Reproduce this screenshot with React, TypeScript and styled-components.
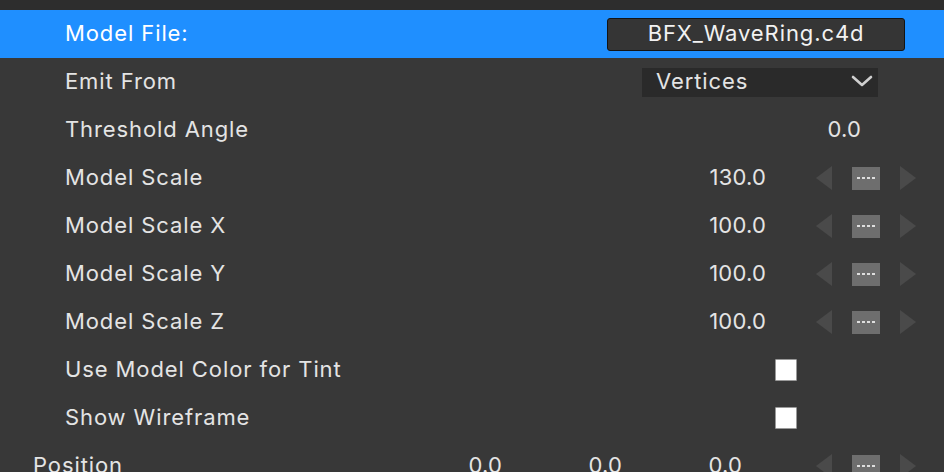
import React from "react";
import styled, { createGlobalStyle } from "styled-components";

const Global = createGlobalStyle`
  html, body { margin: 0; padding: 0; background: #383838; }
  body { font-family: Inter, "Noto Sans", sans-serif; overflow: hidden; }
`;

const Panel = styled.div`
  width: 944px;
  height: 472px;
  background: #383838;
  overflow: hidden;
`;

const TopStrip = styled.div`
  height: 10px;
  background: #2d2d2d;
`;

const Row = styled.div<{ $indent: number; $selected?: boolean }>`
  height: 48px;
  display: flex;
  align-items: center;
  padding-left: ${(p) => p.$indent}px;
  background: ${(p) => (p.$selected ? "#1f8fff" : "transparent")};
  box-sizing: border-box;
  line-height: 26px;
`;

const Label = styled.div<{ $selected?: boolean }>`
  flex: 1;
  font-size: 22px;
  letter-spacing: 0.9px;
  margin-top: -2px;
  color: ${(p) => (p.$selected ? "#ffffff" : "#e4e4e4")};
  white-space: nowrap;
`;

const Controls = styled.div<{ $right: number }>`
  display: flex;
  align-items: center;
  margin-right: ${(p) => p.$right}px;
`;

const FileButton = styled.div`
  width: 298px;
  height: 33px;
  box-sizing: border-box;
  background: #353535;
  border: 1px solid #141414;
  border-radius: 3px;
  display: flex;
  align-items: center;
  justify-content: center;
  color: #f2f2f2;
  font-size: 22px;
  letter-spacing: 0.9px;
  padding-bottom: 2px;
`;

const Dropdown = styled.div`
  width: 236px;
  height: 29px;
  background: #2a2a2a;
  display: flex;
  align-items: center;
  justify-content: space-between;
  padding: 0 5px 2px 14px;
  box-sizing: border-box;
  color: #e4e4e4;
  font-size: 22px;
  letter-spacing: 0.9px;
`;

const Value = styled.div<{ $width: number }>`
  width: ${(p) => p.$width}px;
  text-align: right;
  font-size: 22px;
  letter-spacing: 0.2px;
  margin-top: -2px;
  color: #e4e4e4;
`;

const Stepper = styled.div<{ $gap: number }>`
  display: flex;
  align-items: center;
  margin-left: ${(p) => p.$gap}px;
`;

const Triangle = styled.div<{ $dir: "left" | "right" }>`
  width: 0;
  height: 0;
  border-top: 12px solid transparent;
  border-bottom: 12px solid transparent;
  ${(p) =>
    p.$dir === "left"
      ? "border-right: 16px solid #4a4a4a;"
      : "border-left: 16px solid #4a4a4a;"}
`;

const DashBox = styled.div`
  width: 28px;
  height: 23px;
  margin: 0 20px;
  background: #6e6e6e;
  display: flex;
  align-items: center;
  justify-content: center;
  gap: 2px;
`;

const Dash = styled.span`
  width: 3px;
  height: 2px;
  background: #dedede;
`;

const Checkbox = styled.div`
  width: 22px;
  height: 22px;
  box-sizing: border-box;
  background: #ffffff;
  border: 1px solid #9a9a9a;
  border-radius: 1px;
`;

const StepperControl = ({ gap }: { gap: number }) => (
  <Stepper $gap={gap}>
    <Triangle $dir="left" />
    <DashBox>
      <Dash />
      <Dash />
      <Dash />
      <Dash />
    </DashBox>
    <Triangle $dir="right" />
  </Stepper>
);

const Chevron = () => (
  <svg width="22" height="12" viewBox="0 0 22 12">
    <path d="M2 2 L11 10 L20 2" fill="none" stroke="#cfcfcf" strokeWidth="2.6" strokeLinecap="round" strokeLinejoin="round" />
  </svg>
);

const scaleRows = [
  { label: "Model Scale", value: "130.0" },
  { label: "Model Scale X", value: "100.0" },
  { label: "Model Scale Y", value: "100.0" },
  { label: "Model Scale Z", value: "100.0" },
];

export default function App() {
  return (
    <Panel>
      <Global />
      <TopStrip />
      <Row $indent={65} $selected>
        <Label $selected>Model File:</Label>
        <Controls $right={39}>
          <FileButton>BFX_WaveRing.c4d</FileButton>
        </Controls>
      </Row>
      <Row $indent={65}>
        <Label>Emit From</Label>
        <Controls $right={66}>
          <Dropdown>
            Vertices
            <Chevron />
          </Dropdown>
        </Controls>
      </Row>
      <Row $indent={65}>
        <Label>Threshold Angle</Label>
        <Controls $right={83}>
          <Value $width={80}>0.0</Value>
        </Controls>
      </Row>
      {scaleRows.map((r) => (
        <Row $indent={65} key={r.label}>
          <Label>{r.label}</Label>
          <Controls $right={28}>
            <Value $width={80}>{r.value}</Value>
            <StepperControl gap={50} />
          </Controls>
        </Row>
      ))}
      <Row $indent={65}>
        <Label>Use Model Color for Tint</Label>
        <Controls $right={147}>
          <Checkbox />
        </Controls>
      </Row>
      <Row $indent={65}>
        <Label>Show Wireframe</Label>
        <Controls $right={147}>
          <Checkbox />
        </Controls>
      </Row>
      <Row $indent={33}>
        <Label>Position</Label>
        <Controls $right={28}>
          <Value $width={60}>0.0</Value>
          <Value $width={120}>0.0</Value>
          <Value $width={120}>0.0</Value>
          <StepperControl gap={74} />
        </Controls>
      </Row>
    </Panel>
  );
}
